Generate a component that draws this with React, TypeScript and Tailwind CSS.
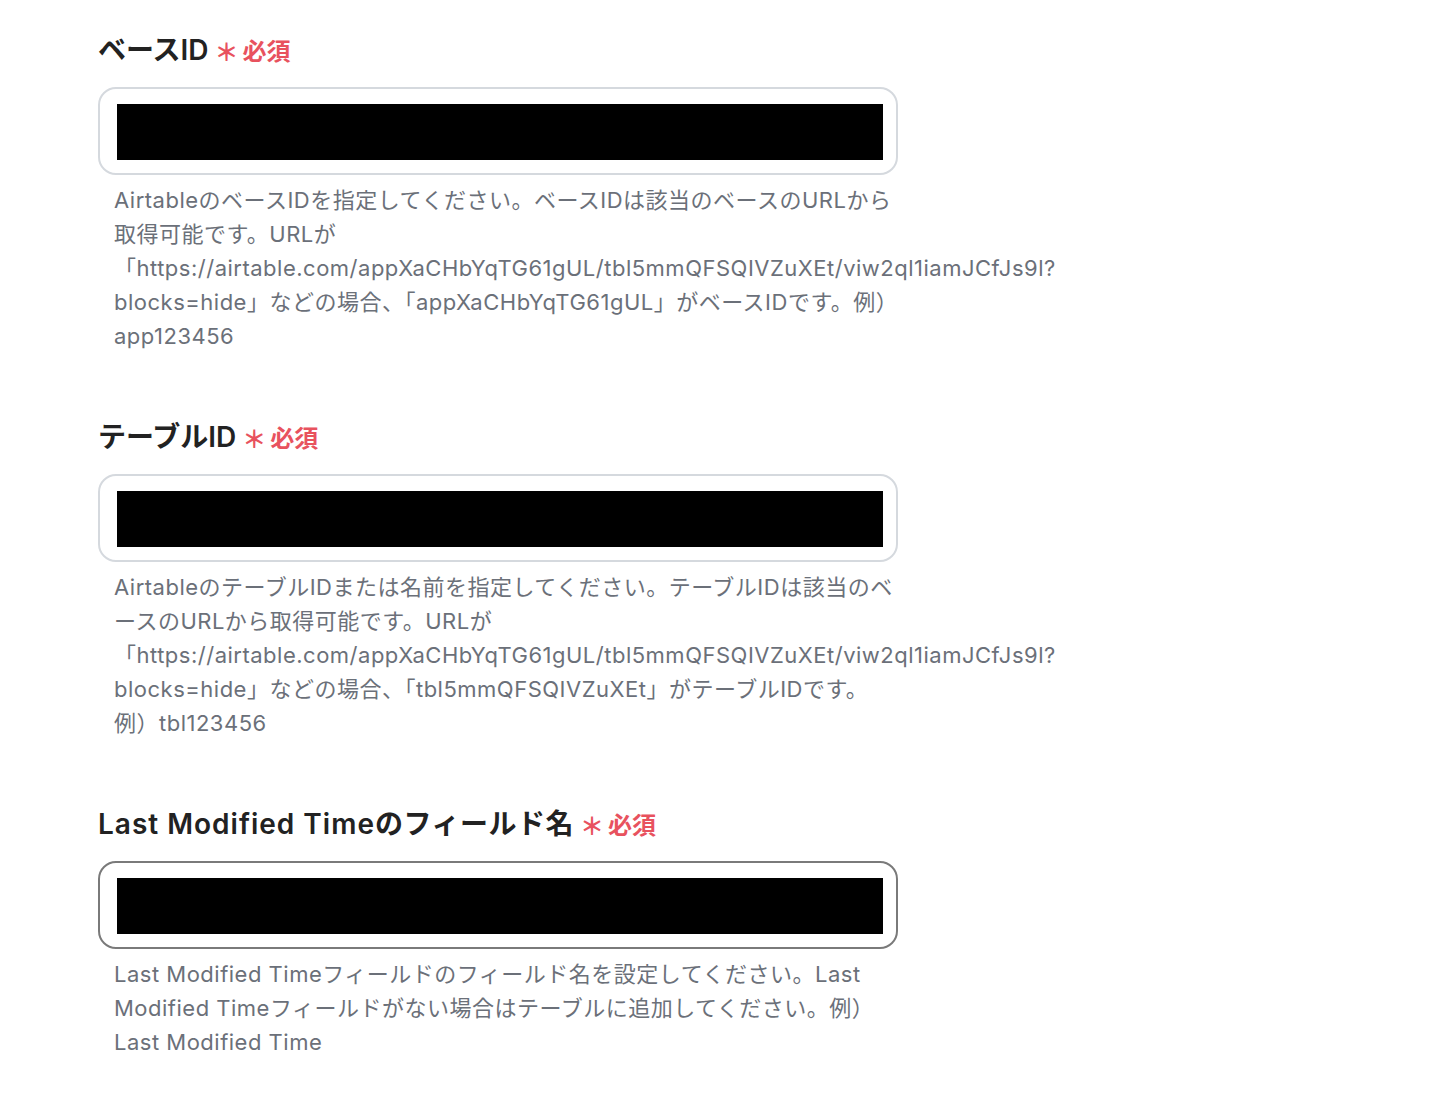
import React from "react";

const FONT = 'Inter, "Noto Sans CJK JP", sans-serif';

function Field({
  label,
  lines,
  focused,
}: {
  label: React.ReactNode;
  lines: string[];
  focused?: boolean;
}) {
  return (
    <div className="flex flex-col">
      <div className="flex items-center h-[40px]">
        <span className="text-[28px] font-semibold text-[#222222] leading-[40px]">
          {label}
        </span>
        <span className="ml-[6px] text-[24px] font-bold text-[#e8525e] leading-[40px] translate-y-[3px]">
          ＊
        </span>
        <span className="ml-[4px] text-[24px] font-bold text-[#e8525e] leading-[40px] translate-y-[2px]">
          必須
        </span>
      </div>
      <div
        className={
          "mt-[17px] w-[800px] h-[88px] rounded-[18px] border-2 bg-white pl-[17px] pt-[15px] " +
          (focused ? "border-[#7a7a7a]" : "border-[#d5d9de]")
        }
      >
        <div className="w-[766px] h-[56px] bg-black" />
      </div>
      <div className="mt-[8px] pl-[16px] text-[22px] leading-[34px] tracking-[0.5px] text-[#6b7079]">
        {lines.map((l, i) => (
          <div key={i} className="whitespace-nowrap">
            {l}
          </div>
        ))}
      </div>
    </div>
  );
}

export default function App() {
  const url =
    "「https://airtable.com/appXaCHbYqTG61gUL/tbl5mmQFSQIVZuXEt/viw2ql1iamJCfJs9l?";
  return (
    <div
      className="min-h-[1098px] w-full bg-white pl-[98px] pt-[30px] flex flex-col gap-[64px]"
      style={{ fontFamily: FONT }}
    >
      <Field
        label="ベースID"
        lines={[
          "AirtableのベースIDを指定してください。ベースIDは該当のベースのURLから",
          "取得可能です。URLが",
          url,
          "blocks=hide」などの場合、「appXaCHbYqTG61gUL」がベースIDです。例）",
          "app123456",
        ]}
      />
      <Field
        label="テーブルID"
        lines={[
          "AirtableのテーブルIDまたは名前を指定してください。テーブルIDは該当のベ",
          "ースのURLから取得可能です。URLが",
          url,
          "blocks=hide」などの場合、「tbl5mmQFSQIVZuXEt」がテーブルIDです。",
          "例）tbl123456",
        ]}
      />
      <Field
        label={
          <>
            <span className="tracking-[1px]">Last Modified Time</span>
            <span className="tracking-[0.5px]">のフィールド名</span>
          </>
        }
        focused
        lines={[
          "Last Modified Timeフィールドのフィールド名を設定してください。Last",
          "Modified Timeフィールドがない場合はテーブルに追加してください。例）",
          "Last Modified Time",
        ]}
      />
    </div>
  );
}
